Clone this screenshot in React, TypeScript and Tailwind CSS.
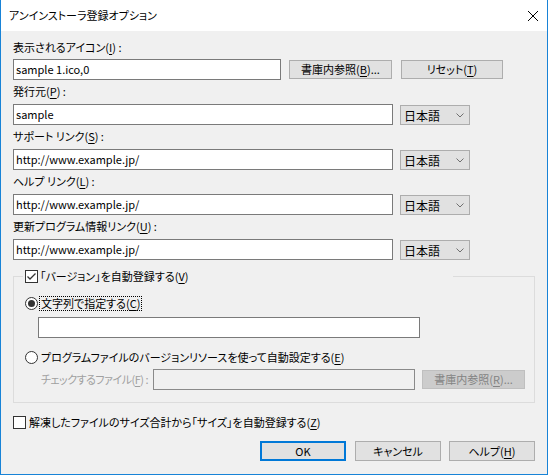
const font = `font-['Noto_Sans_CJK_JP','Liberation_Sans',sans-serif] [font-feature-settings:"palt"]`;

function Key({ k }: { k: string }) {
  return (
    <>
      (<span className="underline underline-offset-2">{k}</span>)
    </>
  );
}

function TextBox({ value, className = '', disabled = false }: { value?: string; className?: string; disabled?: boolean }) {
  return (
    <div
      className={`flex h-[21px] items-center border px-[2px] ${
        disabled ? 'border-[#8a8a8a] bg-[#f0f0f0]' : 'border-[#7a7a7a] bg-white'
      } ${className}`}
    >
      {value}
    </div>
  );
}

function Button({ children, className = '', disabled = false }: { children: React.ReactNode; className?: string; disabled?: boolean }) {
  return (
    <div
      className={`flex items-center justify-center border ${
        disabled ? 'border-[#bfbfbf] bg-[#cccccc] text-[#838383]' : 'border-[#adadad] bg-[#e1e1e1]'
      } ${className}`}
    >
      {children}
    </div>
  );
}

function LangCombo() {
  return (
    <div className="mt-[1px] flex h-[20px] w-[70px] items-center justify-between border border-[#adadad] bg-[#e1e1e1] pl-[3px] pr-[5px]">
      <span className="text-[12px]">日本語</span>
      <svg width="8" height="5" viewBox="0 0 8 5">
        <path d="M0.5 0.5 L4 4 L7.5 0.5" fill="none" stroke="#707070" strokeWidth="1" />
      </svg>
    </div>
  );
}

function Checkbox({ checked }: { checked: boolean }) {
  return (
    <div className="flex h-[13px] w-[13px] shrink-0 items-center justify-center border border-[#333] bg-white">
      {checked && (
        <svg width="11" height="11" viewBox="0 0 11 11">
          <path d="M1.5 5.5 L4 8 L9.5 2.5" fill="none" stroke="#333" strokeWidth="1.3" />
        </svg>
      )}
    </div>
  );
}

function Radio({ checked }: { checked: boolean }) {
  return (
    <div className="flex h-[13px] w-[13px] shrink-0 items-center justify-center rounded-full border border-[#333] bg-white">
      {checked && <div className="h-[7px] w-[7px] rounded-full bg-[#333]" />}
    </div>
  );
}

const linkRows = [
  { label: '発行元', k: 'P', value: 'sample' },
  { label: 'サポート リンク', k: 'S', value: 'http://www.example.jp/' },
  { label: 'ヘルプ リンク', k: 'L', value: 'http://www.example.jp/' },
  { label: '更新プログラム情報リンク', k: 'U', value: 'http://www.example.jp/' },
];

export default function App() {
  return (
    <div
      className={`flex h-[475px] w-[548px] flex-col border-x border-b border-[#1883d7] bg-[#f0f0f0] text-[11px] leading-[15px] text-black ${font}`}
    >
      <div className="flex h-[31px] shrink-0 items-center justify-between bg-white pl-[8px] pr-[9px]">
        <span>アンインストーラ登録オプション</span>
        <svg width="10" height="10" viewBox="0 0 10 10">
          <path d="M0 0 L10 10 M10 0 L0 10" stroke="#000" strokeWidth="1" />
        </svg>
      </div>

      <div className="flex flex-col px-[12px] pt-[9px]">
        <div>
          表示されるアイコン<Key k="I" /> :
        </div>
        <div className="mt-[4px] flex items-start">
          <TextBox value="sample 1.ico,0" className="w-[268px]" />
          <Button className="ml-[8px] mt-[1px] h-[19px] w-[103px]">
            書庫内参照<Key k="B" />...
          </Button>
          <Button className="ml-[9px] mt-[1px] h-[19px] w-[102px]">
            リセット<Key k="T" />
          </Button>
        </div>

        {linkRows.map((row) => (
          <div key={row.k} className="mt-[4px] flex flex-col">
            <div>
              {row.label}
              <Key k={row.k} /> :
            </div>
            <div className="mt-[5px] flex items-start gap-[7px]">
              <TextBox value={row.value} className="w-[380px]" />
              <LangCombo />
            </div>
          </div>
        ))}

        <fieldset className="mt-[9px] w-[522px] border border-[#dcdcdc] pb-[12px]">
          <legend className="ml-[9px] w-[430px] bg-[#f0f0f0] pl-[2px]">
            <div className="flex items-center gap-[2px]">
              <Checkbox checked />
              <span>
                「バージョン」を自動登録する<Key k="V" />
              </span>
            </div>
          </legend>

          <div className="mt-[12px] flex items-center gap-[1px] pl-[11px]">
            <Radio checked />
            <span className="border border-dotted border-black px-[1px] leading-[13px]">
              文字列で指定する<Key k="C" />
            </span>
          </div>
          <TextBox className="ml-[24px] mt-[6px] w-[382px]" />

          <div className="mt-[12px] flex items-center gap-[3px] pl-[11px]">
            <Radio checked={false} />
            <span>
              プログラムファイルのバージョンリソースを使って自動設定する<Key k="E" />
            </span>
          </div>
          <div className="mt-[4px] flex items-center">
            <span className="w-[139px] shrink-0 whitespace-nowrap pl-[27px] tracking-[-0.5px] text-[#a0a0a0]">
              チェックするファイル<Key k="F" /> :
            </span>
            <TextBox disabled className="w-[262px]" />
            <Button disabled className="ml-[7px] h-[19px] w-[103px]">
              書庫内参照<Key k="R" />...
            </Button>
          </div>
        </fieldset>

        <div className="mt-[12px] flex items-center gap-[3px]">
          <Checkbox checked={false} />
          <span>
            解凍したファイルのサイズ合計から「サイズ」を自動登録する<Key k="Z" />
          </span>
        </div>

        <div className="mt-[11px] flex justify-end gap-[8px]">
          <div className="mr-[1px] flex h-[20px] w-[86px] items-center justify-center border-2 border-[#0078d7] bg-[#e1e1e1]">
            OK
          </div>
          <Button className="h-[20px] w-[86px]">キャンセル</Button>
          <Button className="h-[20px] w-[86px]">
            ヘルプ<Key k="H" />
          </Button>
        </div>
      </div>
    </div>
  );
}
